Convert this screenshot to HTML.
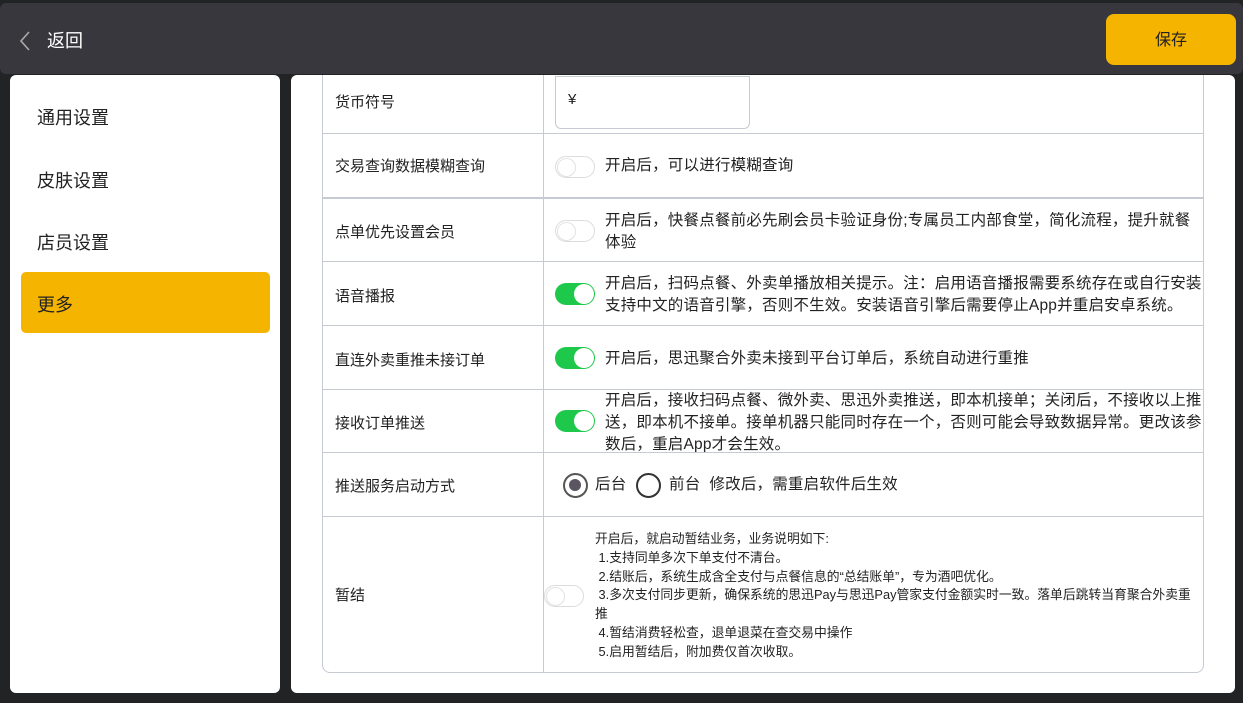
<!DOCTYPE html>
<html><head><meta charset="utf-8"><style>
*{margin:0;padding:0;box-sizing:border-box}
body{width:1243px;height:703px;background:#222325;position:relative;overflow:hidden;font-family:"Liberation Sans","Noto Sans CJK SC",sans-serif;color:#222}
.top{position:absolute;left:0;top:3px;width:1243px;height:71px;background:#38373d;border-radius:6px}
.back{position:absolute;left:47px;top:24px;font-size:18px;color:#fff}
.save{position:absolute;left:1106px;top:14px;width:130px;height:51px;background:#f5b400;border-radius:8px;font-size:16px;color:#222;text-align:center;line-height:53px}
.left{position:absolute;left:10px;top:75px;width:270px;height:618px;background:#fff;border-radius:6px}
.mi{position:absolute;left:27px;font-size:18px;color:#222}
.sel{position:absolute;left:11px;top:197px;width:249px;height:61px;background:#f5b400;border-radius:5px}
.right{position:absolute;left:291px;top:75px;width:944px;height:618px;background:#fff;border-radius:6px;overflow:hidden}
.tbl{position:absolute;left:31px;top:-10px;width:882px;height:608px;border:1px solid #c5cad3;border-radius:0 0 8px 8px}
.vl{position:absolute;left:220px;top:0;bottom:0;width:1px;background:#c5cad3}
.hl{position:absolute;left:0;right:0;height:1px;background:#c5cad3}
.lab{position:absolute;left:12px;font-size:15px;color:#222}
.desc{position:absolute;left:282px;font-size:15.5px;letter-spacing:0.2px;line-height:22px;color:#222;width:597px}
.tg{position:absolute;left:232px;width:40px;height:22px;border-radius:11px}
.off{border:1.5px solid #dcdcdc;background:#fff}
.off::after{content:"";position:absolute;left:1px;top:1px;width:17px;height:17px;border-radius:50%;border:1px solid #e2e2e2;background:#fff}
.on{background:#1ec84b}
.on::after{content:"";position:absolute;right:1px;top:1px;width:20px;height:20px;border-radius:50%;background:#fff}
</style></head><body>
<div class="top">
<svg style="position:absolute;left:18px;top:27px" width="14" height="22"><path d="M11 2 L3 11 L11 20" stroke="#aaa" stroke-width="1.6" fill="none"/></svg>
<div class="back">返回</div>
</div>
<div class="save">保存</div>
<div class="left">
<div class="mi" style="top:29px">通用设置</div>
<div class="mi" style="top:92px">皮肤设置</div>
<div class="mi" style="top:154px">店员设置</div>
<div class="sel"></div>
<div class="mi" style="top:216px">更多</div>
</div>
<div class="right"><div class="tbl">
<div class="vl"></div>
<div class="lab" style="top:25px">货币符号</div>
<div style="position:absolute;left:232px;top:10px;width:195px;height:53px;border:1px solid #c5cad3;border-radius:0 0 6px 6px"></div>
<div style="position:absolute;left:245px;top:25px;font-size:15px">¥</div>
<div class="hl" style="top:67px"></div>
<div class="lab" style="top:89px">交易查询数据模糊查询</div>
<div class="tg off" style="top:90px"></div>
<div class="desc" style="top:89px">开启后，可以进行模糊查询</div>
<div class="hl" style="top:131px;height:2px"></div>
<div class="lab" style="top:155px">点单优先设置会员</div>
<div class="tg off" style="top:154px"></div>
<div class="desc" style="top:144px">开启后，快餐点餐前必先刷会员卡验证身份;专属员工内部食堂，简化流程，提升就餐<br>体验</div>
<div class="hl" style="top:195px"></div>
<div class="lab" style="top:219px">语音播报</div>
<div class="tg on" style="top:217px"></div>
<div class="desc" style="top:207px">开启后，扫码点餐、外卖单播放相关提示。注：启用语音播报需要系统存在或自行安装<br>支持中文的语音引擎，否则不生效。安装语音引擎后需要停止App并重启安卓系统。</div>
<div class="hl" style="top:259px"></div>
<div class="lab" style="top:283px">直连外卖重推未接订单</div>
<div class="tg on" style="top:281px"></div>
<div class="desc" style="top:282px">开启后，思迅聚合外卖未接到平台订单后，系统自动进行重推</div>
<div class="hl" style="top:323px"></div>
<div class="lab" style="top:346px">接收订单推送</div>
<div class="tg on" style="top:344px"></div>
<div class="desc" style="top:324px;height:62px;overflow:hidden;width:620px">开启后，接收扫码点餐、微外卖、思迅外卖推送，即本机接单；关闭后，不接收以上推<br>送，即本机不接单。接单机器只能同时存在一个，否则可能会导致数据异常。更改该参<br>数后，重启App才会生效。</div>
<div class="hl" style="top:386px"></div>
<div class="lab" style="top:409px">推送服务启动方式</div>
<div style="position:absolute;left:240px;top:407px;width:25px;height:25px;border:2.5px solid #555;border-radius:50%"><div style="position:absolute;left:4px;top:4px;width:12px;height:12px;border-radius:50%;background:#5a5560"></div></div>
<div class="desc" style="left:272px;top:408px">后台</div>
<div style="position:absolute;left:313px;top:407px;width:25px;height:25px;border:2.5px solid #333;border-radius:50%"></div>
<div class="desc" style="left:346px;top:408px">前台&nbsp;&nbsp;修改后，需重启软件后生效</div>
<div class="hl" style="top:450px"></div>
<div class="lab" style="top:518px">暂结</div>
<div class="tg off" style="top:519px;left:221px"></div>
<div style="position:absolute;left:272px;top:464px;font-size:12.8px;line-height:18.8px;width:620px">开启后，就启动暂结业务，业务说明如下:<br>&nbsp;1.支持同单多次下单支付不清台。<br>&nbsp;2.结账后，系统生成含全支付与点餐信息的“总结账单”，专为酒吧优化。<br>&nbsp;3.多次支付同步更新，确保系统的思迅Pay与思迅Pay管家支付金额实时一致。落单后跳转当育聚合外卖重<br>推<br>&nbsp;4.暂结消费轻松查，退单退菜在查交易中操作<br>&nbsp;5.启用暂结后，附加费仅首次收取。</div>
</div></div>
</body></html>
